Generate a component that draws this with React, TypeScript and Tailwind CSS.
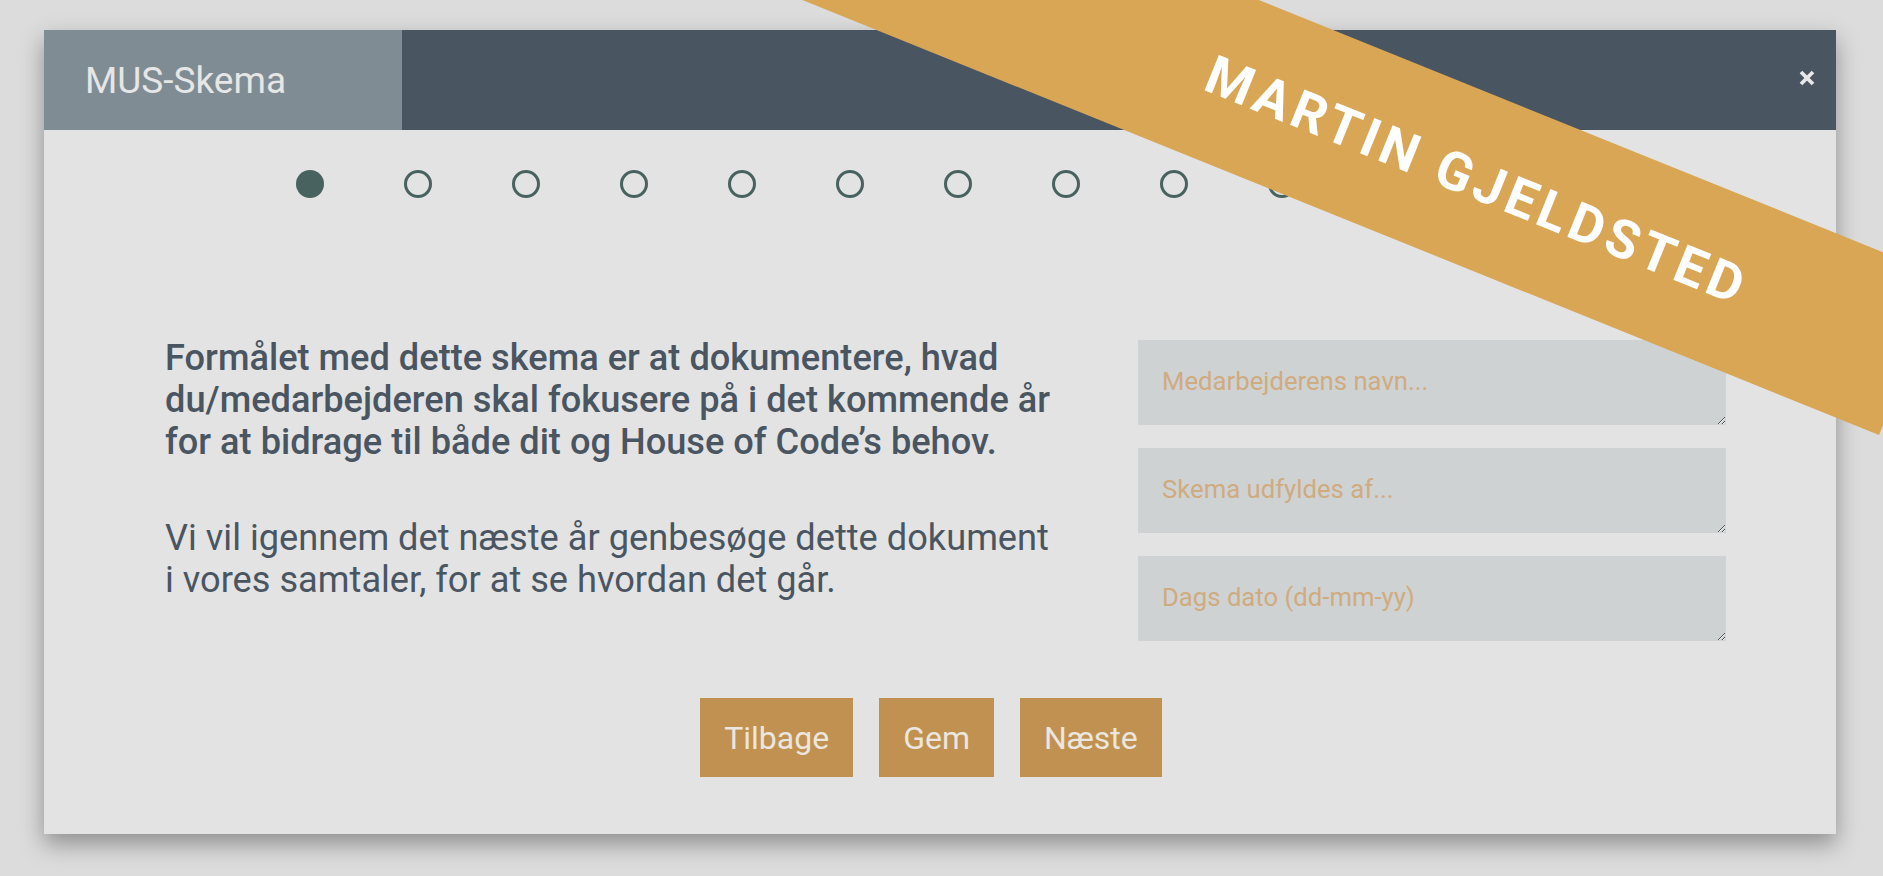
import React from 'react'

const font = { fontFamily: 'Roboto, "Liberation Sans", sans-serif' }

const steps = Array.from({ length: 12 }, (_, i) => i)

const fields = ['Medarbejderens navn...', 'Skema udfyldes af...', 'Dags dato (dd-mm-yy)']

const buttons = ['Tilbage', 'Gem', 'Næste']

const StepDots: React.FC<{ active: number }> = ({ active }) => (
  <div className="flex gap-[80px] pl-[252px] mt-[40px]">
    {steps.map((i) => (
      <div
        key={i}
        className={
          i === active
            ? 'w-[28px] h-[28px] rounded-full bg-[#48625f]'
            : 'w-[28px] h-[28px] rounded-full border-[3px] border-[#48625f]'
        }
      />
    ))}
  </div>
)

export default function App() {
  return (
    <div
      className="relative w-full h-[876px] overflow-hidden bg-[#dcdcdc] pt-[30px] pl-[44px]"
      style={font}
    >
      <div className="w-[1792px] h-[804px] bg-[#e3e3e3] shadow-[0_10px_22px_rgba(0,0,0,0.35)] flex flex-col">
        {/* header */}
        <div className="flex h-[100px] bg-[#4a5562]">
          <div className="w-[358px] bg-[#7f8c93] flex items-center pl-[41px]">
            <span className="text-[37px] text-[#e6e6e6] leading-none">MUS-Skema</span>
          </div>
          <div className="flex-1 flex items-center justify-end pr-[19px] pb-[5px]">
            <button className="w-[20px] h-[20px] flex items-center justify-center">
              <svg width="16" height="16" viewBox="0 0 16 16">
                <path d="M2 2 L14 14 M14 2 L2 14" stroke="#e8e8e8" strokeWidth="3.8" />
              </svg>
            </button>
          </div>
        </div>

        <StepDots active={0} />

        {/* content */}
        <div className="flex items-start pl-[121px] pr-[110px] mt-[142px]">
          <div className="w-[892px] text-[#4a5562] text-[36.2px] leading-[42px] mt-[-3px]">
            <p className="font-medium">
              Formålet med dette skema er at dokumentere, hvad du/medarbejderen skal fokusere på i det
              kommende år for at bidrage til både dit og House of Code’s behov.
            </p>
            <p className="mt-[54px]">
              Vi vil igennem det næste år genbesøge dette dokument i vores samtaler, for at se hvordan
              det går.
            </p>
          </div>
          <div className="flex-1" />
          <div className="w-[588px] flex flex-col gap-[23px]">
            {fields.map((f) => (
              <textarea
                key={f}
                rows={1}
                placeholder={f}
                className="block w-full h-[85px] bg-[#cfd2d3] outline-none pt-[26px] px-[24px] text-[25.7px] leading-[31px] text-[#4a5562] placeholder:text-[#cfab80]"
                style={font}
              />
            ))}
          </div>
        </div>

        {/* buttons */}
        <div className="flex justify-center gap-[26px] mt-[57px] pr-[18px]">
          {buttons.map((b) => (
            <button
              key={b}
              className="h-[79px] px-[24px] bg-[#c09150] text-[#ebe6df] text-[32px]"
              style={font}
            >
              {b}
            </button>
          ))}
        </div>
      </div>

      {/* name ribbon */}
      <div className="absolute left-[562px] top-[8px] w-[1400px] h-[171px] bg-[#d9a655] rotate-[22deg] flex items-center justify-center pl-[464px]">
        <span className="text-white font-bold text-[53.5px] tracking-[0.085em] leading-none">
          MARTIN GJELDSTED
        </span>
      </div>
    </div>
  )
}
